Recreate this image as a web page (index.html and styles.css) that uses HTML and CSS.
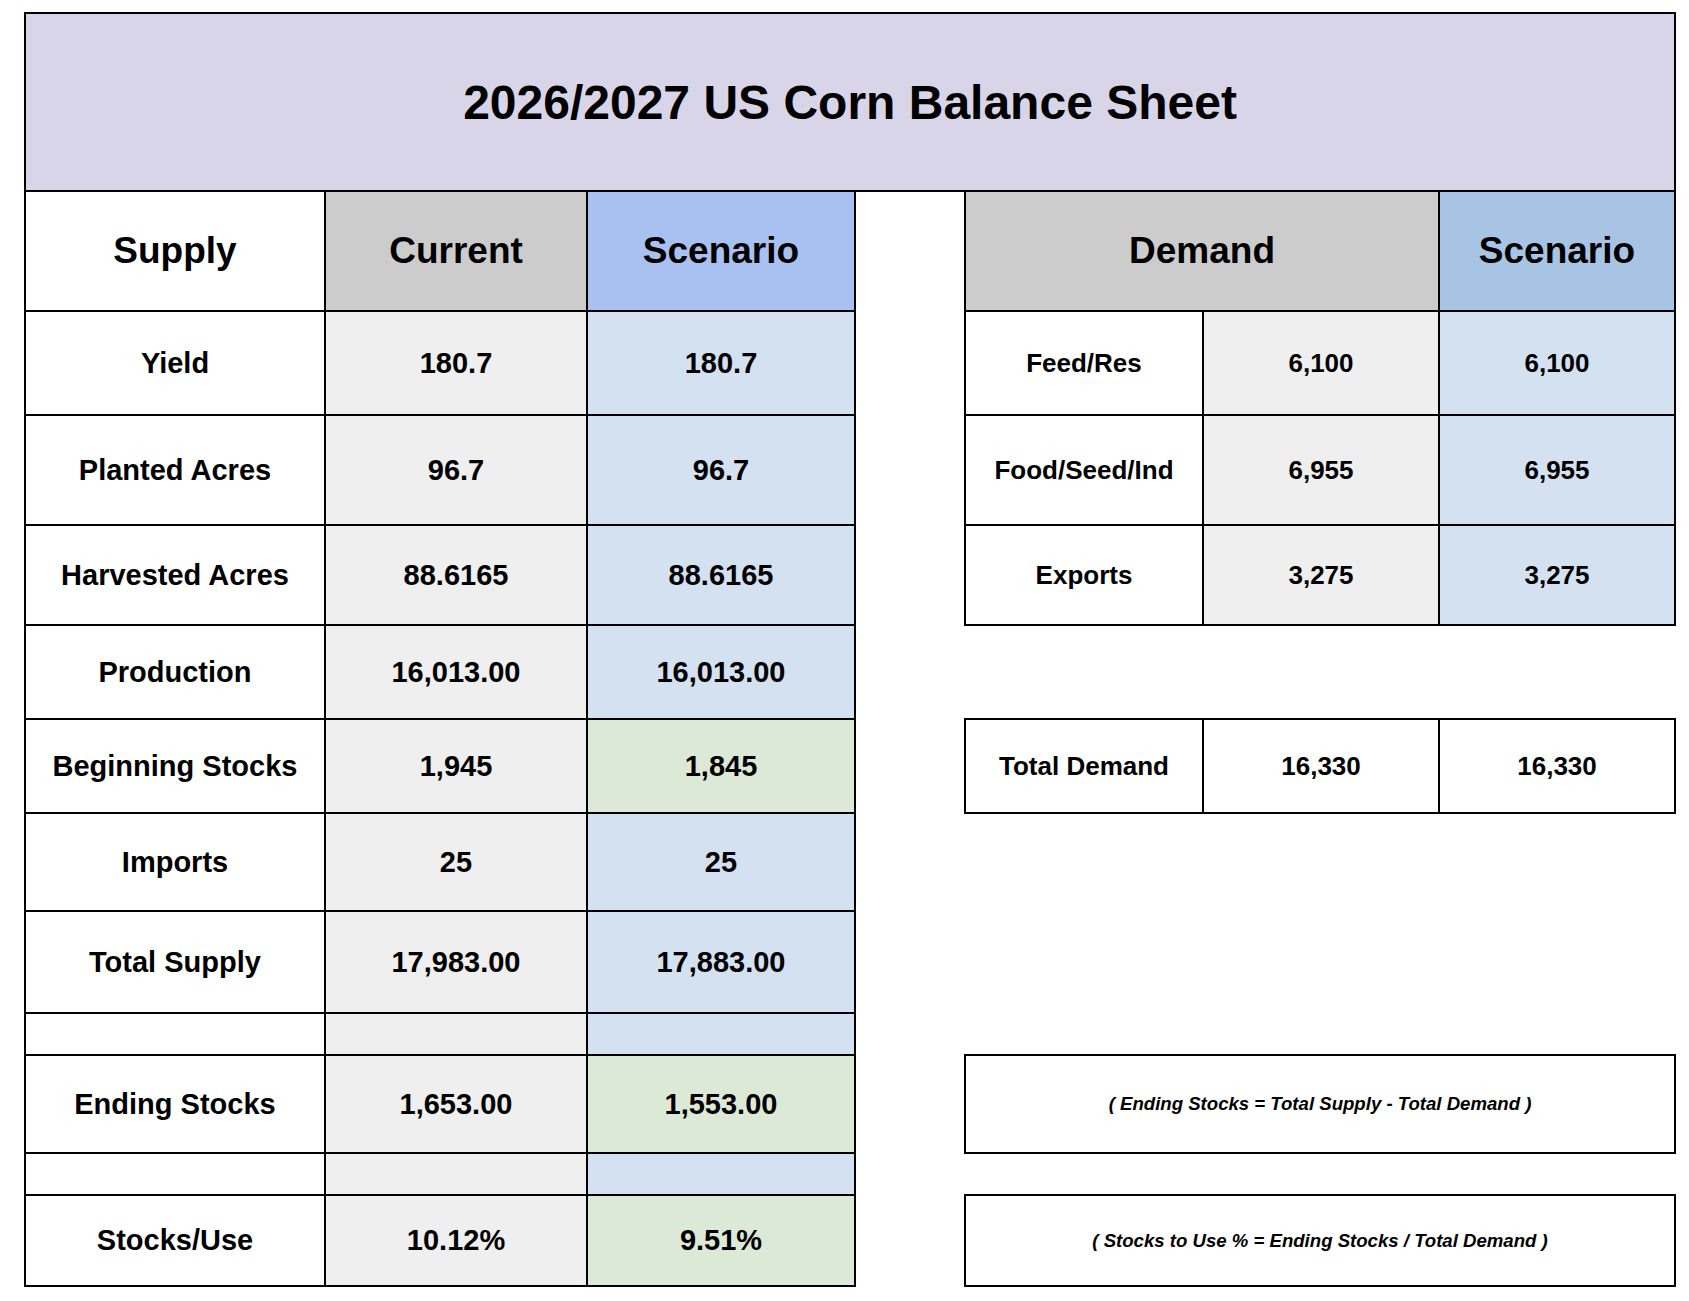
FILE: index.html
```html
<!DOCTYPE html>
<html lang="en">
<head>
<meta charset="utf-8">
<title>2026/2027 US Corn Balance Sheet</title>
<link rel="stylesheet" href="styles.css">
</head>
<body>
<table class="sheet">
  <colgroup>
    <col class="c-label">
    <col class="c-cur">
    <col class="c-scn">
    <col class="c-gap">
    <col class="c-dlabel">
    <col class="c-dcur">
    <col class="c-dscn">
  </colgroup>
  <tr class="r-title">
    <td colspan="7" class="title">2026/2027 US Corn Balance Sheet</td>
  </tr>
  <tr class="r-head">
    <td class="hd">Supply</td>
    <td class="hd gray">Current</td>
    <td class="hd blue-h">Scenario</td>
    <td class="gap"></td>
    <td colspan="2" class="hd gray">Demand</td>
    <td class="hd blue-h2">Scenario</td>
  </tr>
  <tr class="r-yield">
    <td>Yield</td>
    <td class="cur">180.7</td>
    <td class="scn">180.7</td>
    <td class="gap"></td>
    <td class="d">Feed/Res</td>
    <td class="d cur">6,100</td>
    <td class="d scn">6,100</td>
  </tr>
  <tr class="r-planted">
    <td>Planted Acres</td>
    <td class="cur">96.7</td>
    <td class="scn">96.7</td>
    <td class="gap"></td>
    <td class="d">Food/Seed/Ind</td>
    <td class="d cur">6,955</td>
    <td class="d scn">6,955</td>
  </tr>
  <tr class="r-harv">
    <td>Harvested Acres</td>
    <td class="cur">88.6165</td>
    <td class="scn">88.6165</td>
    <td class="gap"></td>
    <td class="d">Exports</td>
    <td class="d cur">3,275</td>
    <td class="d scn">3,275</td>
  </tr>
  <tr class="r-prod">
    <td>Production</td>
    <td class="cur">16,013.00</td>
    <td class="scn">16,013.00</td>
    <td class="gap" colspan="4"></td>
  </tr>
  <tr class="r-begin">
    <td>Beginning Stocks</td>
    <td class="cur">1,945</td>
    <td class="green">1,845</td>
    <td class="gap"></td>
    <td class="d">Total Demand</td>
    <td class="d">16,330</td>
    <td class="d">16,330</td>
  </tr>
  <tr class="r-imports">
    <td>Imports</td>
    <td class="cur">25</td>
    <td class="scn">25</td>
    <td class="gap" colspan="4"></td>
  </tr>
  <tr class="r-total">
    <td>Total Supply</td>
    <td class="cur">17,983.00</td>
    <td class="scn">17,883.00</td>
    <td class="gap" colspan="4"></td>
  </tr>
  <tr class="r-blank">
    <td></td>
    <td class="cur"></td>
    <td class="scn"></td>
    <td class="gap" colspan="4"></td>
  </tr>
  <tr class="r-ending">
    <td>Ending Stocks</td>
    <td class="cur">1,653.00</td>
    <td class="green">1,553.00</td>
    <td class="gap"></td>
    <td colspan="3" class="note">( Ending Stocks = Total Supply - Total Demand )</td>
  </tr>
  <tr class="r-blank">
    <td></td>
    <td class="cur"></td>
    <td class="scn"></td>
    <td class="gap" colspan="4"></td>
  </tr>
  <tr class="r-su">
    <td>Stocks/Use</td>
    <td class="cur">10.12%</td>
    <td class="green">9.51%</td>
    <td class="gap"></td>
    <td colspan="3" class="note">( Stocks to Use % = Ending Stocks / Total Demand )</td>
  </tr>
</table>
</body>
</html>
```

FILE: styles.css
```css
html, body {
  margin: 0;
  padding: 0;
  background: #ffffff;
}

body {
  padding: 12px 0 0 24px;
  font-family: "Liberation Sans", Arial, sans-serif;
  color: #000000;
}

.sheet {
  border-collapse: collapse;
  table-layout: fixed;
  width: 1650px;
}

.c-label { width: 300px; }
.c-cur { width: 262px; }
.c-scn { width: 268px; }
.c-gap { width: 110px; }
.c-dlabel { width: 238px; }
.c-dcur { width: 236px; }
.c-dscn { width: 236px; }

.sheet td {
  border: 2px solid #000000;
  padding: 0;
  text-align: center;
  vertical-align: middle;
  font-weight: 700;
  font-size: 29px;
  white-space: nowrap;
  background: #ffffff;
}

.sheet td.gap {
  border: none;
  background: transparent;
}

.r-title { height: 178px; }
.r-head { height: 120px; }
.r-yield { height: 104px; }
.r-planted { height: 110px; }
.r-harv { height: 100px; }
.r-prod { height: 94px; }
.r-begin { height: 94px; }
.r-imports { height: 98px; }
.r-total { height: 102px; }
.r-blank { height: 42px; }
.r-ending { height: 98px; }
.r-su { height: 91px; }

.sheet td.title {
  background: #d9d5e9;
  font-size: 48px;
}

.sheet td.hd {
  font-size: 37px;
}

.sheet td.gray {
  background: #cccccc;
}

.sheet td.blue-h {
  background: #a8c1f0;
}

.sheet td.blue-h2 {
  background: #a7c4e4;
}

.sheet td.cur {
  background: #efefef;
}

.sheet td.scn {
  background: #d3e1f1;
}

.sheet td.green {
  background: #dde9d7;
}

.sheet td.d {
  font-size: 26px;
}

.sheet td.note {
  font-size: 18.6px;
  font-style: italic;
}
```
